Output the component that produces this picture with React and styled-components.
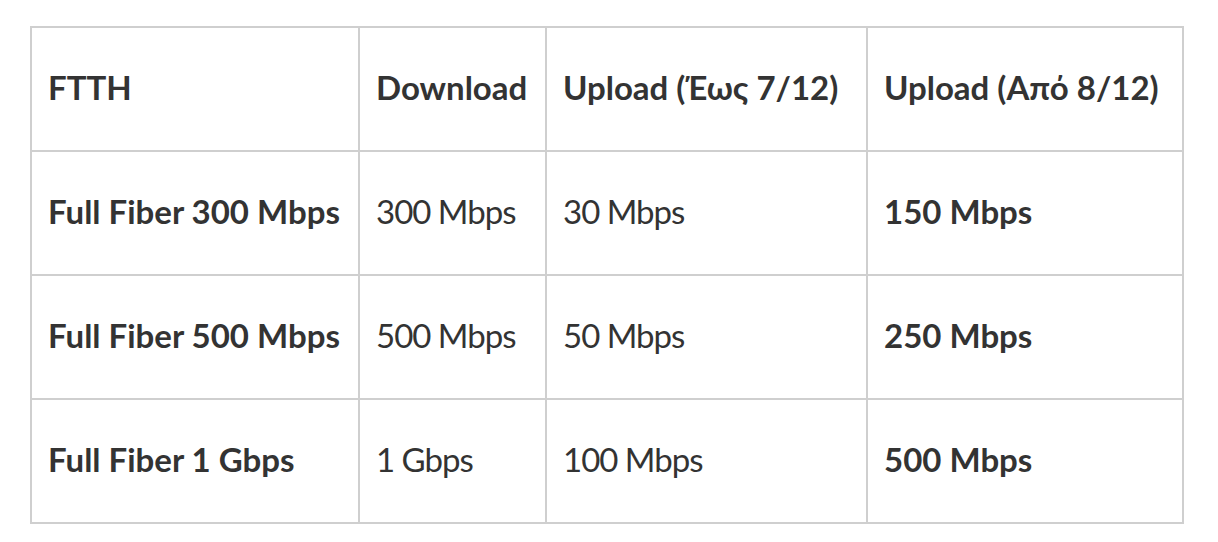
import React from "react";
import styled, { createGlobalStyle } from "styled-components";

const Global = createGlobalStyle`
  body {
    margin: 0;
    background: #fff;
    font-family: Lato, "Open Sans", sans-serif;
  }
`;

const Page = styled.div`
  padding: 26px 0 0 30px;
`;

const Table = styled.table`
  width: 1152px;
  border-collapse: collapse;
  table-layout: fixed;
  color: #333;
  font-size: 33px;
`;

const Cell = styled.td`
  height: 118px;
  padding: 0 0 4px 16px;
  border: 2px solid #cfcfcf;
  vertical-align: middle;
  white-space: nowrap;
  font-weight: ${(p) => (p.$bold ? 700 : 400)};
  letter-spacing: ${(p) => (p.$bold ? "0" : "-1px")};
`;

const Head = styled(Cell).attrs({ as: "th" })`
  text-align: left;
  font-weight: 700;
  letter-spacing: 0;
`;

const rows = [
  ["Full Fiber 300 Mbps", "300 Mbps", "30 Mbps", "150 Mbps"],
  ["Full Fiber 500 Mbps", "500 Mbps", "50 Mbps", "250 Mbps"],
  ["Full Fiber 1 Gbps", "1 Gbps", "100 Mbps", "500 Mbps"],
];

export default function App() {
  return (
    <Page>
      <Global />
      <Table>
        <colgroup>
          <col style={{ width: 328 }} />
          <col style={{ width: 187 }} />
          <col style={{ width: 321 }} />
          <col style={{ width: 316 }} />
        </colgroup>
        <thead>
          <tr>
            <Head>FTTH</Head>
            <Head>Download</Head>
            <Head>Upload (Έως 7/12)</Head>
            <Head>Upload (Από 8/12)</Head>
          </tr>
        </thead>
        <tbody>
          {rows.map((r) => (
            <tr key={r[0]}>
              <Cell $bold>{r[0]}</Cell>
              <Cell>{r[1]}</Cell>
              <Cell>{r[2]}</Cell>
              <Cell $bold>{r[3]}</Cell>
            </tr>
          ))}
        </tbody>
      </Table>
    </Page>
  );
}
